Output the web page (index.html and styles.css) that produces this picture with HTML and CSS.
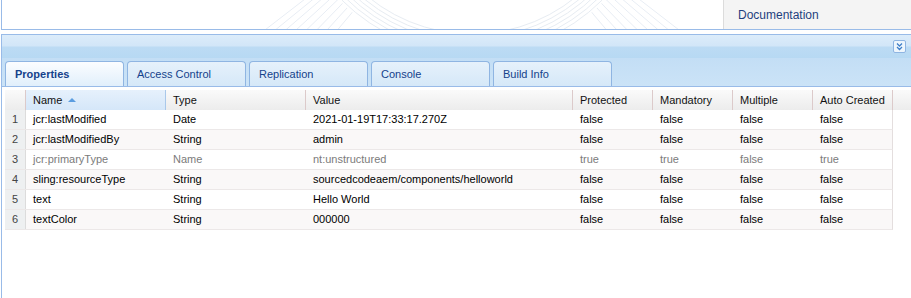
FILE: index.html
```html
<!DOCTYPE html>
<html lang="en">
<head>
  <meta charset="UTF-8">
  <title>CRXDE Lite</title>
  <link rel="stylesheet" href="styles.css">
</head>
<body>
  <div class="top">
    <div class="top-main">
      <svg class="arcs" width="722" height="29" viewBox="0 0 722 29">
        <g stroke="#e8edf4" stroke-width="1" fill="none">
          <line x1="470" y1="-130" x2="250" y2="40"/>
          <line x1="470" y1="-130" x2="261" y2="40"/>
          <line x1="470" y1="-130" x2="272" y2="40"/>
          <line x1="470" y1="-130" x2="283" y2="40"/>
          <line x1="470" y1="-130" x2="294" y2="40"/>
          <line x1="470" y1="-130" x2="305" y2="40"/>
          <line x1="470" y1="-130" x2="316" y2="40"/>
          <line x1="470" y1="-130" x2="327" y2="40"/>
          <line x1="470" y1="-130" x2="613" y2="40"/>
          <line x1="470" y1="-130" x2="624" y2="40"/>
          <line x1="470" y1="-130" x2="635" y2="40"/>
          <line x1="470" y1="-130" x2="646" y2="40"/>
          <line x1="470" y1="-130" x2="657" y2="40"/>
          <line x1="470" y1="-130" x2="668" y2="40"/>
          <line x1="470" y1="-130" x2="679" y2="40"/>
          <line x1="470" y1="-130" x2="690" y2="40"/>
        </g>
        <circle cx="470" cy="-130" r="186" fill="#fff"/>
        <g stroke="#e7ecf2" stroke-width="1" fill="none">
          <circle cx="470" cy="-130" r="164"/>
          <circle cx="470" cy="-130" r="168"/>
          <circle cx="470" cy="-130" r="172"/>
          <circle cx="470" cy="-130" r="176"/>
          <circle cx="470" cy="-130" r="180"/>
          <circle cx="470" cy="-130" r="184"/>
        </g>
      </svg>
    </div>
    <div class="side">
      <ul class="side-links">
        <li><a href="#">Documentation</a></li>
      </ul>
    </div>
  </div>

  <div class="panel">
    <div class="panel-header">
      <span class="tool-btn">
        <svg width="11" height="11" viewBox="0 0 11 11">
          <path d="M3 2.5 L5.5 5 L8 2.5 M3 6 L5.5 8.5 L8 6" stroke="#3f7fc9" stroke-width="1.3" fill="none"/>
        </svg>
      </span>
    </div>

    <div class="tabstrip">
      <ul class="tabs">
        <li class="tab active">Properties</li>
        <li class="tab">Access Control</li>
        <li class="tab">Replication</li>
        <li class="tab">Console</li>
        <li class="tab">Build Info</li>
      </ul>
    </div>

    <div class="panel-body">
      <div class="grid-head">
        <div class="hcell rn"></div>
        <div class="hcell sorted">Name <span class="sort-up"></span></div>
        <div class="hcell">Type</div>
        <div class="hcell">Value</div>
        <div class="hcell">Protected</div>
        <div class="hcell">Mandatory</div>
        <div class="hcell">Multiple</div>
        <div class="hcell">Auto Created</div>
        <div class="hcell filler"></div>
      </div>

      <div class="grid-body">
        <div class="row">
          <div class="cell rn">1</div>
          <div class="cell">jcr:lastModified</div>
          <div class="cell">Date</div>
          <div class="cell">2021-01-19T17:33:17.270Z</div>
          <div class="cell">false</div>
          <div class="cell">false</div>
          <div class="cell">false</div>
          <div class="cell">false</div>
        </div>
        <div class="row alt">
          <div class="cell rn">2</div>
          <div class="cell">jcr:lastModifiedBy</div>
          <div class="cell">String</div>
          <div class="cell">admin</div>
          <div class="cell">false</div>
          <div class="cell">false</div>
          <div class="cell">false</div>
          <div class="cell">false</div>
        </div>
        <div class="row protected">
          <div class="cell rn">3</div>
          <div class="cell">jcr:primaryType</div>
          <div class="cell">Name</div>
          <div class="cell">nt:unstructured</div>
          <div class="cell">true</div>
          <div class="cell">true</div>
          <div class="cell">false</div>
          <div class="cell">true</div>
        </div>
        <div class="row alt">
          <div class="cell rn">4</div>
          <div class="cell">sling:resourceType</div>
          <div class="cell">String</div>
          <div class="cell">sourcedcodeaem/components/helloworld</div>
          <div class="cell">false</div>
          <div class="cell">false</div>
          <div class="cell">false</div>
          <div class="cell">false</div>
        </div>
        <div class="row">
          <div class="cell rn">5</div>
          <div class="cell">text</div>
          <div class="cell">String</div>
          <div class="cell">Hello World</div>
          <div class="cell">false</div>
          <div class="cell">false</div>
          <div class="cell">false</div>
          <div class="cell">false</div>
        </div>
        <div class="row alt">
          <div class="cell rn">6</div>
          <div class="cell">textColor</div>
          <div class="cell">String</div>
          <div class="cell">000000</div>
          <div class="cell">false</div>
          <div class="cell">false</div>
          <div class="cell">false</div>
          <div class="cell">false</div>
        </div>
      </div>
    </div>
  </div>
</body>
</html>
```

FILE: styles.css
```css
body {
  margin: 0;
  height: 100vh;
  display: flex;
  flex-direction: column;
  background-color: #fff;
  font-family: "Liberation Sans", Arial, sans-serif;
  overflow: hidden;
}

/* top welcome area */
.top {
  display: flex;
  flex: none;
  height: 29px;
  margin-left: 1px;
  border-left: 1px solid #99bbe8;
  border-bottom: 1px solid #99bbe8;
  overflow: hidden;
}

.top-main {
  width: 721px;
  flex: none;
}

.arcs {
  display: block;
}

.side {
  flex: 1;
  background-color: #f4f4f4;
  border-left: 1px solid #dcdcdc;
}

.side-links {
  list-style: none;
  margin: 5px 0 0;
  padding: 0 0 0 14px;
  font-size: 12px;
  line-height: 20px;
}

.side-links a {
  color: #1f3f7e;
  text-decoration: none;
}

/* lower panel */
.panel {
  flex: 1;
  margin: 4px 0 0 1px;
  border-left: 1px solid #99bbe8;
  border-top: 1px solid #99bbe8;
}

.panel-header {
  height: 23px;
  display: flex;
  justify-content: flex-end;
  align-items: center;
  padding-right: 5px;
  background: linear-gradient(#dcecfa 0, #d2e6f8 48%, #bcdbf4 52%, #b7d9f3 100%);
}

.tool-btn {
  width: 11px;
  height: 11px;
  border: 1px solid #8fb5e2;
  border-radius: 2px;
  background-color: #eef6fd;
  display: flex;
}

.tabstrip {
  height: 25px;
  padding-top: 3px;
  background: linear-gradient(#c3def5, #cbe3f7);
  border-bottom: 1px solid #99bbe8;
}

.tabs {
  list-style: none;
  margin: 0;
  padding: 0 0 0 3px;
  display: flex;
  gap: 3px;
  height: 25px;
}

.tab {
  width: 108px;
  padding-left: 9px;
  border: 1px solid #8fb5e2;
  border-bottom: none;
  border-radius: 4px 4px 0 0;
  background: linear-gradient(#e6f1fb, #d5e8f8);
  color: #15428b;
  font-size: 11px;
  line-height: 24px;
}

.tab.active {
  font-weight: bold;
  background: linear-gradient(#fbfdff, #e1effb);
}

.panel-body {
  padding: 3px 0 0 3px;
}

/* grid */
.grid-head {
  display: grid;
  grid-template-columns: 21px 140px 140px 267px 80px 80px 80px 80px 1fr;
  height: 20px;
  background: linear-gradient(#fafafa, #ececec);
  font-size: 11px;
  color: #111;
}

.hcell {
  padding-left: 7px;
  line-height: 20px;
  border-right: 1px solid #dccaca;
  white-space: nowrap;
}

.hcell.rn,
.hcell.filler {
  padding-left: 0;
}

.hcell.filler {
  border-right: none;
}

.hcell.sorted {
  background: linear-gradient(#e6f1fc, #d5e7f9);
  border-right: 1px solid #a9c8ea;
}

.sort-up {
  display: inline-block;
  width: 0;
  height: 0;
  margin-left: 3px;
  vertical-align: 2px;
  border-left: 4px solid transparent;
  border-right: 4px solid transparent;
  border-bottom: 4px solid #5b9de0;
}

.grid-body {
  width: 888px;
}

.row {
  display: grid;
  grid-template-columns: 21px 140px 140px 267px 80px 80px 80px 80px;
  height: 19px;
  border-bottom: 1px solid #ece8e8;
  border-right: 1px solid #e4dede;
  background-color: #fff;
  font-size: 11px;
  color: #000;
}

.row.alt {
  background-color: #faf8f8;
}

.row.protected {
  color: #7b7b7b;
}

.cell {
  padding-left: 7px;
  line-height: 19px;
  white-space: nowrap;
  overflow: hidden;
}

.cell.rn {
  padding-left: 0;
  text-align: center;
  background-color: #eef0f1;
  border-right: 1px solid #dcdcdc;
  color: #444;
}
```
